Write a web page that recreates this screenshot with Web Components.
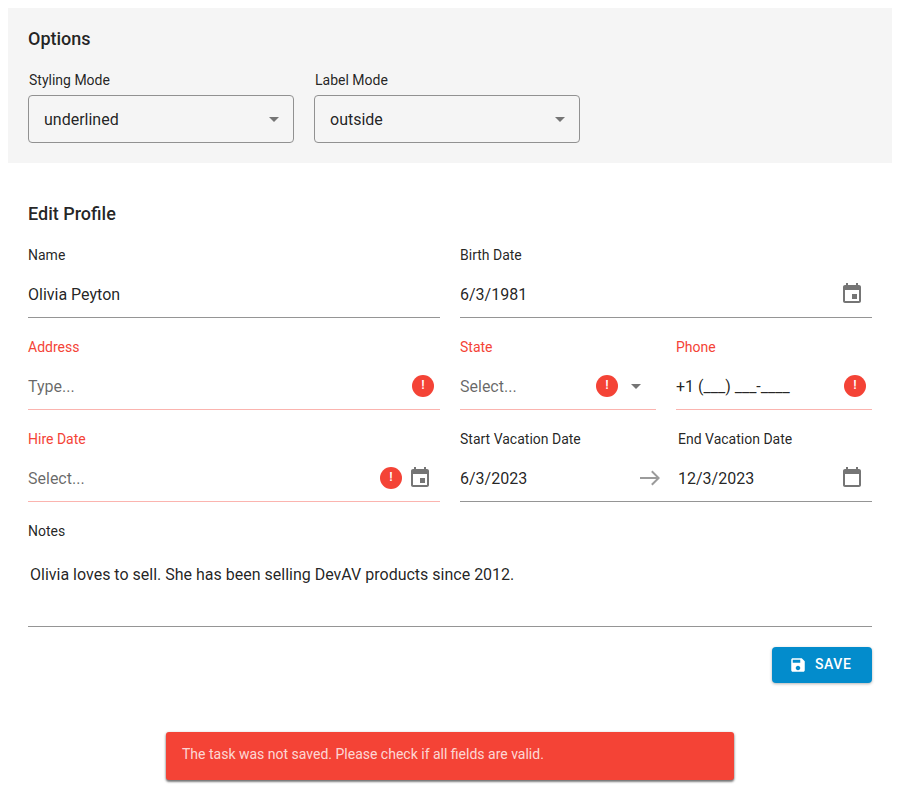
<!DOCTYPE html>
<html lang="en">
<head>
<meta charset="utf-8">
<title>Edit Profile</title>
<style>
html, body { background: #fff; }
body { margin: 8px; font-family: Roboto, "Liberation Sans", sans-serif; font-size: 16px; color: rgba(0,0,0,.87); }
</style>
</head>
<body>
<profile-page></profile-page>
<script>
function define(name, html) {
  const template = document.createElement('template');
  template.innerHTML = html;
  customElements.define(name, class extends HTMLElement {
    constructor() {
      super();
      this.attachShadow({ mode: 'open' }).append(template.content.cloneNode(true));
    }
  });
}

const ICONS = {
  event: 'M17 12h-5v5h5v-5zM16 1v2H8V1H6v2H5c-1.11 0-1.99.9-1.99 2L3 19c0 1.1.89 2 2 2h14c1.1 0 2-.9 2-2V5c0-1.1-.9-2-2-2h-1V1h-2zm3 18H5V8h14v11z',
  calendar: 'M16 1v2H8V1H6v2H5c-1.11 0-1.99.9-1.99 2L3 19c0 1.1.89 2 2 2h14c1.1 0 2-.9 2-2V5c0-1.1-.9-2-2-2h-1V1h-2zm3 18H5V8h14v11z',
  drop: 'M7 10l5 5 5-5z',
  arrow: 'M2 11h16.2l-5.1-5.1 1.4-1.4L22 12l-7.5 7.5-1.4-1.4 5.1-5.1H2z',
  save: 'M17 3H5c-1.11 0-2 .9-2 2v14c0 1.1.89 2 2 2h14c1.1 0 2-.9 2-2V7l-4-4zm-5 16c-1.66 0-3-1.34-3-3s1.34-3 3-3 3 1.34 3 3-1.34 3-3 3zm3-10H5V5h10v4z'
};

customElements.define('ui-icon', class extends HTMLElement {
  connectedCallback() {
    if (this.shadowRoot) return;
    this.attachShadow({ mode: 'open' }).innerHTML = `
      <style>
        :host { display: block; flex: none; width: 24px; height: 24px; color: #757575; }
        svg { display: block; width: 100%; height: 100%; fill: currentColor; }
      </style>
      <svg viewBox="0 0 24 24"><path d="${ICONS[this.getAttribute('name')]}"/></svg>`;
  }
});

define('invalid-badge', `
  <style>
    :host { display: block; flex: none; box-sizing: border-box; width: 22px; height: 22px; border-radius: 50%;
      background: #f44336; color: #fff; font-size: 13px; font-weight: 500; line-height: 20px; text-align: center; }
  </style>!`);

define('form-field', `
  <style>
    :host { display: flex; flex-direction: column; min-width: 0; }
    .label { height: 24px; line-height: 18px; font-size: 14px; white-space: nowrap; }
    .box { display: flex; align-items: center; gap: 6px; box-sizing: border-box; height: 48px;
      padding-right: 8px; border-bottom: 1px solid #959595; }
    .value { flex: 1; min-width: 0; padding-top: 2px; line-height: 20px; white-space: pre; }
    :host([invalid]) .label { color: #f44336; }
    :host([invalid]) .box { border-color: #fbb4af; }
    :host([tight]) .box { padding-right: 6px; }
    :host([placeholder]) .value { color: rgba(0,0,0,.6); }
    :host([outlined]) { width: 266px; }
    :host([outlined]) .label { padding-left: 1px; }
    :host([outlined]) .box { border: 1px solid #919191; border-radius: 4px; padding: 0 7px 0 15px; }
    :host([multiline]) .box { height: 81px; align-items: flex-start; padding: 17px 2px 0; }
    :host([range-part]) .box { border: 0; }
    ::slotted([slot=icons]) { margin-top: 1px; }
    :host([outlined]) ::slotted([slot=icons]) { margin-top: 0; }
    :host([range-part]) ::slotted([slot=icons]) { margin-top: -1px; }
  </style>
  <div class="label"><slot name="label"></slot></div>
  <div class="box"><div class="value"><slot></slot></div><slot name="icons"></slot></div>`);

define('date-range', `
  <style>
    :host { display: flex; align-items: flex-end; height: 72px; box-sizing: border-box; border-bottom: 1px solid #959595; }
    ::slotted(*) { margin-bottom: -1px; }
    ::slotted(form-field) { flex: 1; }
    ::slotted(ui-icon) { height: 24px; margin: 0 16px 11px 0; color: #9b9b9b; }
  </style>
  <slot></slot>`);

define('section-title', `
  <style>:host { display: block; font-size: 18px; font-weight: 500; line-height: 22px; }</style>
  <slot></slot>`);

define('options-panel', `
  <style>
    :host { display: block; box-sizing: border-box; height: 155px; padding: 20px; background: #f5f5f5; }
    .row { display: flex; gap: 20px; margin-top: 21px; }
  </style>
  <section-title>Options</section-title>
  <div class="row">
    <form-field outlined><span slot="label">Styling Mode</span>underlined<ui-icon slot="icons" name="drop"></ui-icon></form-field>
    <form-field outlined><span slot="label">Label Mode</span>outside<ui-icon slot="icons" name="drop"></ui-icon></form-field>
  </div>`);

define('save-button', `
  <style>
    :host { display: flex; align-items: center; box-sizing: border-box; width: 100px; height: 36px; padding-left: 17px;
      border-radius: 4px; background: #038ccc; color: #fff; font-size: 14px; font-weight: 500; letter-spacing: .56px;
      line-height: 18px; box-shadow: 0 1px 3px rgba(0,0,0,.3); }
    ui-icon { width: 18px; height: 18px; margin-right: 8px; color: #fff; }
    span { padding-bottom: 2px; }
  </style>
  <ui-icon name="save"></ui-icon><span><slot></slot></span>`);

define('toast-message', `
  <style>
    :host { display: block; position: relative; box-sizing: border-box; width: 568px; height: 48px; padding: 13px 16px; border-radius: 3px;
      background: #f44336; color: rgba(255,255,255,.8); font-size: 14px; line-height: 18px;
      box-shadow: 0 1px 3px rgba(0,0,0,.4), 0 2px 2px rgba(0,0,0,.35); }
  </style>
  <slot></slot>`);

define('profile-form', `
  <style>
    :host { display: block; padding: 40px 20px 0; }
    .grid { display: grid; grid-template-columns: repeat(4, 1fr); gap: 20px; margin-top: 21px; }
    .half { grid-column: span 2; }
    .full { grid-column: span 4; }
    .end { flex: 0 0 194px; }
    .actions { display: flex; justify-content: flex-end; margin-top: 20px; }
  </style>
  <section-title>Edit Profile</section-title>
  <div class="grid">
    <form-field class="half"><span slot="label">Name</span>Olivia Peyton</form-field>
    <form-field class="half"><span slot="label">Birth Date</span>6/3/1981<ui-icon slot="icons" name="event"></ui-icon></form-field>
    <form-field class="half" invalid placeholder tight><span slot="label">Address</span>Type...<invalid-badge slot="icons"></invalid-badge></form-field>
    <form-field invalid placeholder><span slot="label">State</span>Select...<invalid-badge slot="icons"></invalid-badge><ui-icon slot="icons" name="drop"></ui-icon></form-field>
    <form-field invalid tight><span slot="label">Phone</span>+1 (___) ___-____<invalid-badge slot="icons"></invalid-badge></form-field>
    <form-field class="half" invalid placeholder><span slot="label">Hire Date</span>Select...<invalid-badge slot="icons"></invalid-badge><ui-icon slot="icons" name="event"></ui-icon></form-field>
    <date-range class="half">
      <form-field range-part><span slot="label">Start Vacation Date</span>6/3/2023</form-field>
      <ui-icon name="arrow"></ui-icon>
      <form-field range-part class="end"><span slot="label">End Vacation Date</span>12/3/2023<ui-icon slot="icons" name="calendar"></ui-icon></form-field>
    </date-range>
    <form-field class="full" multiline><span slot="label">Notes</span>Olivia loves to sell. She has been selling DevAV products since 2012.</form-field>
  </div>
  <div class="actions"><save-button>SAVE</save-button></div>`);

define('profile-page', `
  <style>
    :host { display: flex; flex-direction: column; min-height: 784px; }
    toast-message { align-self: center; margin-top: 49px; }
  </style>
  <options-panel></options-panel>
  <profile-form></profile-form>
  <toast-message>The task was not saved. Please check if all fields are valid.</toast-message>`);
</script>
</body>
</html>
